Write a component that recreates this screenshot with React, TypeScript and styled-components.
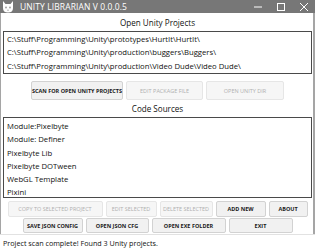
import styled, { createGlobalStyle } from 'styled-components';

const GlobalStyle = createGlobalStyle`
  html, body {
    margin: 0;
    padding: 0;
    background: #ffffff;
  }
  * {
    box-sizing: border-box;
  }
`;

const PROJECTS = [
  'C:\\Stuff\\Programming\\Unity\\prototypes\\HurtIt\\HurtIt\\',
  'C:\\Stuff\\Programming\\Unity\\production\\buggers\\Buggers\\',
  'C:\\Stuff\\Programming\\Unity\\production\\Video Dude\\Video Dude\\',
];

const SOURCES = [
  'Module:Pixelbyte',
  'Module: Definer',
  'Pixelbyte Lib',
  'Pixelbyte DOTween',
  'WebGL Template',
  'Pixini',
];

const Window = styled.div`
  width: 315px;
  height: 250px;
  display: flex;
  flex-direction: column;
  background: #ffffff;
  font-family: 'Open Sans', 'Noto Sans', sans-serif;
  color: #111111;
  overflow: hidden;
`;

const TitleBar = styled.div`
  height: 13px;
  flex: none;
  display: flex;
  align-items: center;
  background: #777777;
  color: #ffffff;
  padding-left: 2px;
`;

const Title = styled.span`
  font-size: 8.5px;
  margin-left: 6px;
  letter-spacing: 0.1px;
  flex: 1;
  white-space: nowrap;
`;

const Controls = styled.div`
  display: flex;
  align-items: center;
  height: 100%;
`;

const ControlBox = styled.div`
  width: 23px;
  height: 13px;
  display: flex;
  align-items: center;
  justify-content: center;
`;

const Body = styled.div`
  flex: 1;
  display: flex;
  flex-direction: column;
  border-left: 1px solid #a5a5a5;
  border-right: 2px solid #a5a5a5;
  padding: 0 1px 0 2px;
`;

const Heading = styled.div<{ $h: number }>`
  height: ${(p) => p.$h}px;
  flex: none;
  display: flex;
  align-items: center;
  justify-content: center;
  font-size: 8.1px;
`;

const ListBox = styled.div<{ $h: number; $pt: number }>`
  height: ${(p) => p.$h}px;
  flex: none;
  border: 1px solid #4a4a4a;
  background: #ffffff;
  padding: ${(p) => p.$pt}px 0 0 3px;
  overflow: hidden;
`;

const ListItem = styled.div`
  height: 13.3px;
  line-height: 13.3px;
  font-size: 7.7px;
  white-space: nowrap;
`;

const ButtonRow = styled.div<{ $mt: number; $h: number }>`
  display: flex;
  justify-content: center;
  gap: 3px;
  margin-top: ${(p) => p.$mt}px;
  height: ${(p) => p.$h}px;
  flex: none;
`;

const Button = styled.div<{ $w: number; $off?: boolean }>`
  width: ${(p) => p.$w}px;
  height: 100%;
  display: flex;
  align-items: center;
  justify-content: center;
  border: 1px solid ${(p) => (p.$off ? '#e6e6e6' : '#d2d2d2')};
  border-radius: 2px;
  background: ${(p) => (p.$off ? '#f6f6f6' : '#f1f1f1')};
  color: ${(p) => (p.$off ? '#b0b0b0' : '#1a1a1a')};
  font-size: 5.5px;
  font-weight: ${(p) => (p.$off ? 400 : 700)};
  white-space: nowrap;
`;

const StatusBar = styled.div`
  margin-top: auto;
  height: 16px;
  flex: none;
  display: flex;
  align-items: center;
  border-top: 1px solid #e2e2e2;
  padding-left: 3px;
  font-size: 7.2px;
`;

const AppIcon = () => (
  <svg width="12" height="12" viewBox="0 0 12 12">
    <path d="M1 0 L3.5 3 H8.5 L11 0 L11 7 Q11 11.5 6 11.5 Q1 11.5 1 7 Z" fill="#ffffff" />
    <circle cx="4" cy="6.5" r="0.9" fill="#9a9a9a" />
    <circle cx="8" cy="6.5" r="0.9" fill="#9a9a9a" />
    <path d="M5 9 Q6 9.8 7 9" stroke="#9a9a9a" strokeWidth="0.7" fill="none" />
  </svg>
);

const TOP_BUTTONS = [
  { label: 'SCAN FOR OPEN UNITY PROJECTS', w: 92 },
  { label: 'EDIT PACKAGE FILE', w: 77, off: true },
  { label: 'OPEN UNITY DIR', w: 78, off: true },
];

const ROW_ONE = [
  { label: 'COPY TO SELECTED PROJECT', w: 95, off: true },
  { label: 'EDIT SELECTED', w: 51, off: true },
  { label: 'DELETE SELECTED', w: 53, off: true },
  { label: 'ADD NEW', w: 50 },
  { label: 'ABOUT', w: 39 },
];

const ROW_TWO = [
  { label: 'SAVE JSON CONFIG', w: 60 },
  { label: 'OPEN JSON CFG', w: 63 },
  { label: 'OPEN EXE FOLDER', w: 74 },
  { label: 'EXIT', w: 64 },
];

type Btn = { label: string; w: number; off?: boolean };

const renderButtons = (list: Btn[]) =>
  list.map((b) => (
    <Button key={b.label} $w={b.w} $off={b.off}>
      {b.label}
    </Button>
  ));

export default function App() {
  return (
    <>
      <GlobalStyle />
      <Window>
        <TitleBar>
          <AppIcon />
          <Title>UNITY LIBRARIAN V 0.0.0.5</Title>
          <Controls>
            <ControlBox>
              <svg width="8" height="8" viewBox="0 0 8 8">
                <path d="M0 4 H8" stroke="#ffffff" strokeWidth="1" />
              </svg>
            </ControlBox>
            <ControlBox>
              <svg width="8" height="8" viewBox="0 0 8 8">
                <rect x="0.5" y="0.5" width="7" height="7" stroke="#ffffff" fill="none" />
              </svg>
            </ControlBox>
            <ControlBox>
              <svg width="8" height="8" viewBox="0 0 8 8">
                <path d="M0 0 L8 8 M8 0 L0 8" stroke="#ffffff" strokeWidth="1" />
              </svg>
            </ControlBox>
          </Controls>
        </TitleBar>
        <Body>
          <Heading $h={18}>Open Unity Projects</Heading>
          <ListBox $h={43} $pt={1}>
            {PROJECTS.map((p) => (
              <ListItem key={p}>{p}</ListItem>
            ))}
          </ListBox>
          <ButtonRow $mt={7} $h={19}>
            {renderButtons(TOP_BUTTONS)}
          </ButtonRow>
          <Heading $h={17}>Code Sources</Heading>
          <ListBox $h={81} $pt={2}>
            {SOURCES.map((s) => (
              <ListItem key={s}>{s}</ListItem>
            ))}
          </ListBox>
          <ButtonRow $mt={3} $h={16}>
            {renderButtons(ROW_ONE)}
          </ButtonRow>
          <ButtonRow $mt={1} $h={15}>
            {renderButtons(ROW_TWO)}
          </ButtonRow>
        </Body>
        <StatusBar>Project scan complete! Found 3 Unity projects.</StatusBar>
      </Window>
    </>
  );
}
